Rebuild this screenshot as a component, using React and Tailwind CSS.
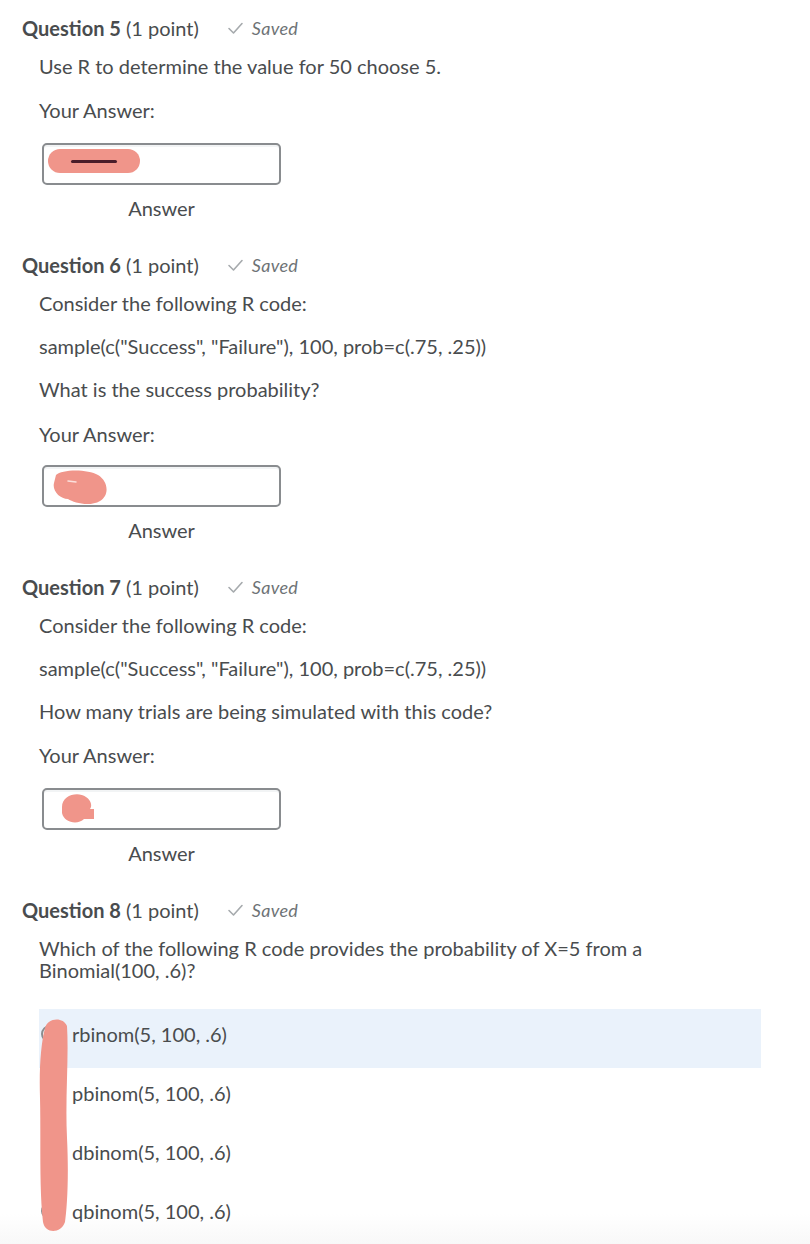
import React from "react";

const font = { fontFamily: "Lato, 'Open Sans', sans-serif" };

function Check() {
  return (
    <svg width="17" height="14" viewBox="0 0 17 14" className="mr-[8px]">
      <path d="M2 7.5 L6.5 12 L15 2.5" fill="none" stroke="#a6aaad" strokeWidth="1.6" strokeLinecap="round" strokeLinejoin="round" />
    </svg>
  );
}

function Heading({ num, className }) {
  return (
    <div className={"flex items-center h-[22px] text-[20px] pl-[22px] " + (className || "")}>
      <span className="font-bold">Question {num}</span>
      <span className="ml-[5px]">(1 point)</span>
      <span className="ml-[28px] flex items-center text-[18px] italic text-[#6e7376]">
        <Check />
        <span className="tracking-[0.3px]">Saved</span>
      </span>
    </div>
  );
}

function Line({ children, className }) {
  return <p className={"pl-[39px] text-[20px] leading-[22px] " + (className || "")}>{children}</p>;
}

function AnswerBox({ blob, className }) {
  return (
    <div className={"pl-[42px] " + (className || "")}>
      <div className="relative w-[239px] h-[42px] rounded-[5px] border-2 border-[#898c8f] bg-white shadow-[inset_0_2px_0_#f2f4f5]">
        {blob}
      </div>
      <div className="w-[239px] text-center text-[20px] leading-[22px] mt-[12px]">Answer</div>
    </div>
  );
}

const blob5 = (
  <div className="absolute left-[4px] top-[4px] w-[92px] h-[24px] rounded-full bg-[#f0958a] flex items-center justify-center">
    <div className="w-[46px] h-[3px] rounded-full bg-[#4a1d2a]" />
  </div>
);

const blob6 = (
  <svg className="absolute left-[6px] top-[2px]" width="60" height="36" viewBox="0 0 60 36">
    <path d="M6 6 C 12 0, 38 0, 48 6 C 58 12, 60 26, 50 32 C 40 38, 24 34, 18 30 C 10 30, 2 22, 4 14 Z" fill="#f0958a" />
    <path d="M18 12 L 26 13" stroke="#fbe0dc" strokeWidth="1.5" strokeLinecap="round" />
  </svg>
);

const blob7 = (
  <svg className="absolute left-[14px] top-[1px]" width="40" height="34" viewBox="0 0 40 34">
    <path d="M4 16 C 4 4, 20 0, 28 6 C 34 10, 34 16, 32 18 L 36 18 L 36 28 L 26 28 C 20 34, 6 32, 4 22 Z" fill="#f0958a" />
  </svg>
);

const options = ["rbinom(5, 100, .6)", "pbinom(5, 100, .6)", "dbinom(5, 100, .6)", "qbinom(5, 100, .6)"];

export default function App() {
  return (
    <div style={font} className="relative w-[810px] h-[1244px] overflow-hidden bg-white text-[#494c4e]">
      <div className="absolute left-0 right-0 bottom-0 h-[30px] bg-gradient-to-b from-white to-[#f8f8f8]" />
      <div className="relative pt-[17px]">
        {/* Question 5 */}
        <Heading num={5} />
        <Line className="mt-[16px]">Use R to determine the value for 50 choose 5.</Line>
        <Line className="mt-[22px]">Your Answer:</Line>
        <AnswerBox className="mt-[22px]" blob={blob5} />

        {/* Question 6 */}
        <Heading num={6} className="mt-[35px]" />
        <Line className="mt-[16px]">Consider the following R code:</Line>
        <Line className="mt-[21px]">sample(c("Success", "Failure"), 100, prob=c(.75, .25))</Line>
        <Line className="mt-[21px]">What is the success probability?</Line>
        <Line className="mt-[23px]">Your Answer:</Line>
        <AnswerBox className="mt-[20px]" blob={blob6} />

        {/* Question 7 */}
        <Heading num={7} className="mt-[35px]" />
        <Line className="mt-[16px]">Consider the following R code:</Line>
        <Line className="mt-[21px]">sample(c("Success", "Failure"), 100, prob=c(.75, .25))</Line>
        <Line className="mt-[21px]">How many trials are being simulated with this code?</Line>
        <Line className="mt-[22px]">Your Answer:</Line>
        <AnswerBox className="mt-[22px]" blob={blob7} />

        {/* Question 8 */}
        <Heading num={8} className="mt-[35px]" />
        <Line className="mt-[16px] pr-[120px]">Which of the following R code provides the probability of X=5 from a Binomial(100, .6)?</Line>

        <div className="relative mt-[28px] ml-[39px] w-[722px]">
          {options.map((o, i) => (
            <div key={o} className={"flex items-center h-[59px] pb-[10px] " + (i === 0 ? "bg-[#eaf2fb]" : "")}>
              <div className="ml-[2px] w-[18px] h-[18px] rounded-full border-2 border-[#8a8d90] bg-white" />
              <span className="ml-[13px] text-[20px] leading-[22px]">{o}</span>
            </div>
          ))}
          <svg className="absolute left-[-2px] top-[9px]" width="36" height="216" viewBox="0 0 36 216">
            <path d="M8 10 C 10 0, 26 -2, 30 8 C 32 40, 28 80, 30 120 C 32 160, 30 190, 28 204 C 24 216, 8 216, 6 204 C 2 170, 4 120, 3 80 C 2 50, 4 25, 8 10 Z" fill="#f0958a" />
          </svg>
        </div>
      </div>
    </div>
  );
}
